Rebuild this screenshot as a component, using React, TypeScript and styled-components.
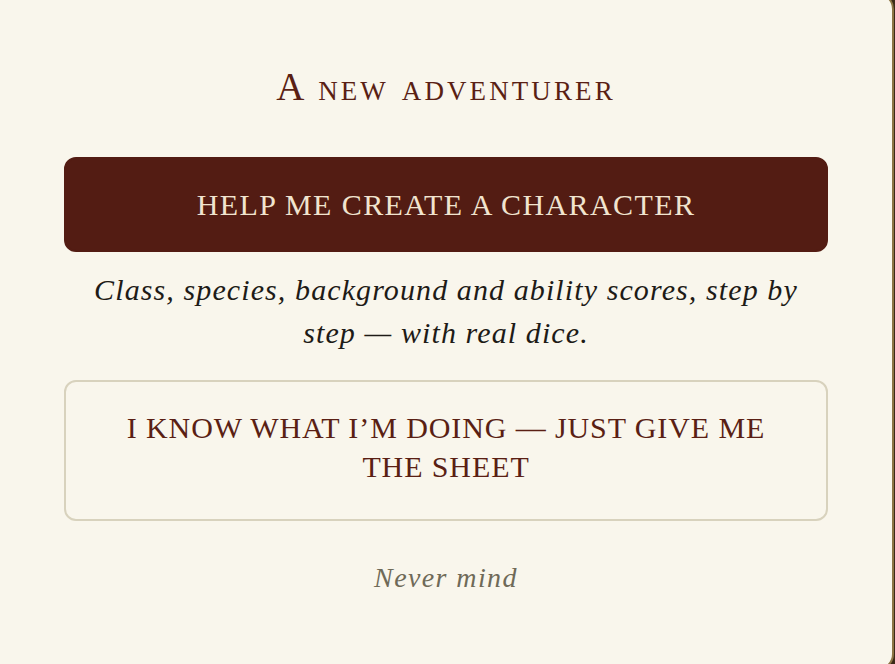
import React from "react";
import styled, { createGlobalStyle } from "styled-components";

const COLORS = {
  backdrop: "#3b2a17",
  edge: "#8c7444",
  paper: "#f9f6ec",
  oxblood: "#531c13",
  ink: "#1e1b17",
  title: "#5a1f14",
  bone: "#f1e4cf",
  rule: "#d8d2bd",
  muted: "#6f6a58",
};

const GlobalStyle = createGlobalStyle`
  html, body {
    margin: 0;
    padding: 0;
    background: ${COLORS.backdrop};
  }
  body {
    font-family: "Liberation Serif", "Times New Roman", serif;
  }
`;

const Viewport = styled.div`
  width: 100vw;
  height: 100vh;
  overflow: hidden;
  background: ${COLORS.backdrop};
`;

const Card = styled.div`
  box-sizing: border-box;
  margin: -7px 0 0 -7px;
  width: calc(100% + 6px);
  height: calc(100% + 13px);
  background: ${COLORS.paper};
  border: 2px solid ${COLORS.edge};
  border-radius: 16px;
  padding: 72px 64px 0 69px;
  display: flex;
  flex-direction: column;
  align-items: stretch;
`;

const Title = styled.h2`
  margin: 0;
  text-align: center;
  font-family: "Liberation Serif", serif;
  font-weight: 400;
  font-size: 39px;
  line-height: 40px;
  font-variant: small-caps;
  letter-spacing: 3.1px;
  color: ${COLORS.title};
`;

const Choice = styled.button<{ $primary?: boolean }>`
  box-sizing: border-box;
  width: 100%;
  margin: 0;
  font-family: "Liberation Serif", serif;
  font-size: 30px;
  line-height: 39px;
  letter-spacing: ${(p) => (p.$primary ? "1.4px" : "0.9px")};
  text-transform: uppercase;
  text-align: center;
  border-radius: 12px;
  cursor: pointer;
  background: ${(p) => (p.$primary ? COLORS.oxblood : "transparent")};
  color: ${(p) => (p.$primary ? COLORS.bone : COLORS.title)};
  border: 2px solid ${(p) => (p.$primary ? COLORS.oxblood : COLORS.rule)};
  padding: ${(p) => (p.$primary ? "26px 40px" : "26px 40px 33px")};
`;

const Primary = styled(Choice)`
  margin-top: 50px;
`;

const Blurb = styled.p`
  margin: 16px 0 0;
  text-align: center;
  font-family: "Liberation Serif", serif;
  font-style: italic;
  font-size: 30px;
  line-height: 43px;
  letter-spacing: 1.1px;
  color: ${COLORS.ink};
`;

const Secondary = styled(Choice)`
  margin-top: 26px;
`;

const Dismiss = styled.button`
  align-self: center;
  margin-top: 37px;
  padding: 4px 8px;
  background: none;
  border: none;
  cursor: pointer;
  font-family: "Liberation Serif", serif;
  font-style: italic;
  font-size: 28px;
  line-height: 32px;
  letter-spacing: 1.4px;
  color: ${COLORS.muted};
`;

export default function App() {
  return (
    <Viewport>
      <GlobalStyle />
      <Card>
        <Title>A new adventurer</Title>
        <Primary $primary>Help me create a character</Primary>
        <Blurb>
          Class, species, background and ability scores, step by step — with
          real dice.
        </Blurb>
        <Secondary>I know what I’m doing — just give me the sheet</Secondary>
        <Dismiss>Never mind</Dismiss>
      </Card>
    </Viewport>
  );
}
